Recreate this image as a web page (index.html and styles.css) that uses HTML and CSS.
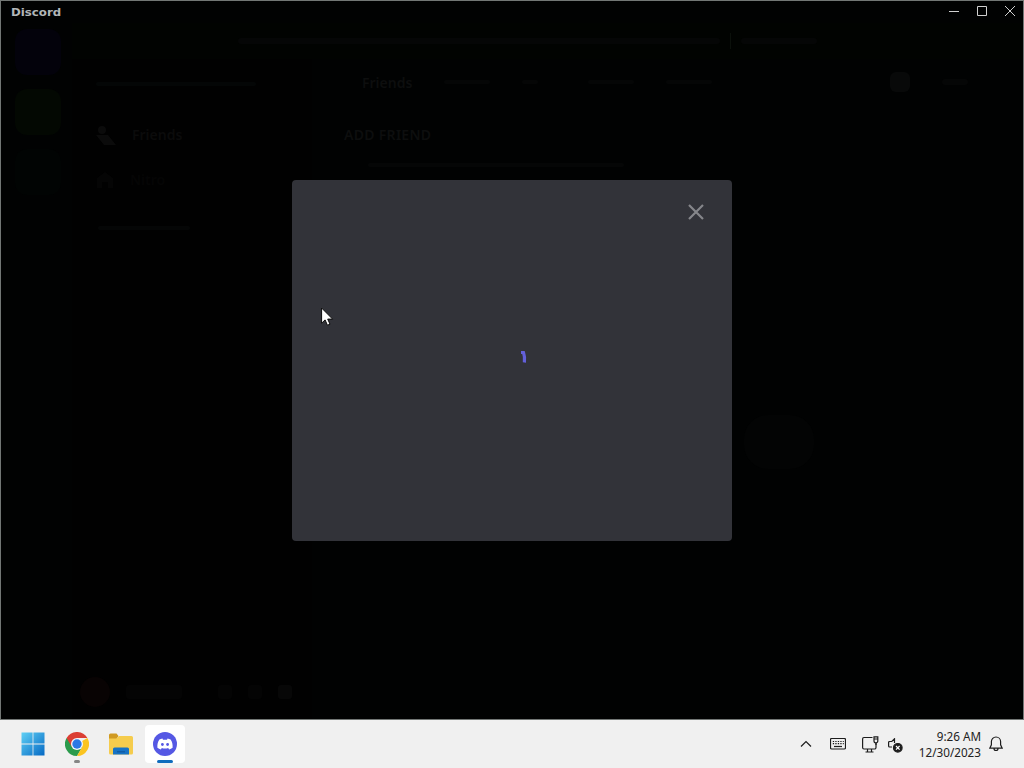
FILE: index.html
```html
<!DOCTYPE html>
<html lang="en">
<head>
  <meta charset="UTF-8" />
  <meta name="viewport" content="width=device-width, initial-scale=1" />
  <title>Discord</title>
  <link rel="stylesheet" href="styles.css">
</head>
<body>

  <!-- App window -->
  <div class="window">
    <header class="titlebar">
      <span class="wordmark">Discord</span>
      <div class="window-buttons">
        <svg width="28" height="22" viewBox="0 0 28 22"><path d="M9 11.5h10" /></svg>
        <svg width="28" height="22" viewBox="0 0 28 22"><path d="M9.500 6.500h9v9h-9z" /></svg>
        <svg width="28" height="22" viewBox="0 0 28 22"><path d="M9 6l10 10M19 6L9 16" /></svg>
      </div>
    </header>

    <!-- Dimmed app behind the modal -->
    <div class="app">
      <nav class="servers">
        <span class="server home"></span>
        <span class="server green"></span>
        <span class="server teal"></span>
      </nav>
      <div class="main">
        <div class="notice">
          <span class="bar notice-text"></span>
          <span class="notice-line"></span>
          <span class="bar notice-button"></span>
        </div>
        <div class="columns">
          <aside class="sidebar">
            <div class="bar search"></div>
            <div class="nav-item active">
              <svg width="20" height="20" viewBox="0 0 20 20"><circle cx="6" cy="5" r="4" /><path d="M0 10h12l8 10H8z" /></svg>
              <span>Friends</span>
            </div>
            <div class="nav-item">
              <svg width="18" height="18" viewBox="0 0 18 18"><path d="M1 7l8-6 8 6v10h-5v-6H6v6H1z" /></svg>
              <span>Nitro</span>
            </div>
            <div class="bar dm-title"></div>
            <div class="user">
              <span class="avatar"></span>
              <span class="bar user-name"></span>
              <span class="bar mic"></span>
              <span class="bar phones"></span>
              <span class="bar gear"></span>
            </div>
          </aside>
          <main class="content">
            <div class="tabs">
              <span class="tab-title">Friends</span>
              <span class="bar tab-a"></span>
              <span class="bar tab-b"></span>
              <span class="bar tab-c"></span>
              <span class="bar tab-d"></span>
              <span class="tab-icon"></span>
              <span class="bar tab-e"></span>
            </div>
            <h2 class="heading">ADD FRIEND</h2>
            <div class="bar hint"></div>
            <div class="blob"></div>
          </main>
        </div>
      </div>
    </div>

    <!-- Modal -->
    <div class="modal">
      <svg class="modal-close" width="24" height="24" viewBox="0 0 24 24"><path d="M5 5l14 14M19 5L5 19" /></svg>
      <svg class="spinner" width="10" height="16" viewBox="0 0 10 16"><path d="M2 3.500h2.500Q6 7.500 5.400 13.500" /></svg>
    </div>
  </div>

  <!-- Taskbar -->
  <footer class="taskbar">
    <div class="apps">
      <div class="app-button">
        <svg width="24" height="24" viewBox="0 0 24 24">
          <defs>
            <linearGradient id="win" x1="0" y1="0" x2="1" y2="1">
              <stop offset="0" stop-color="#5fd0f5" />
              <stop offset="1" stop-color="#0569c4" />
            </linearGradient>
          </defs>
          <path fill="url(#win)" d="M.5.500h11.100v11.100H.5zM12.400.500h11.100v11.100H12.400zM.5 12.400h11.100v11.100H.5zM12.400 12.400h11.100v11.100H12.400z" />
        </svg>
      </div>
      <div class="app-button">
        <svg width="24" height="24" viewBox="0 0 24 24">
          <path fill="#2b9b4c" d="M12 12l5.200 3L12 24A12 12 0 0 1 1.600 6z" />
          <path fill="#fbc41f" d="M12 12L22.400 6A12 12 0 0 1 12 24l5.200-9z" />
          <path fill="#db3f34" d="M12 12L6.800 15 1.600 6a12 12 0 0 1 20.800 0H12z" />
          <circle cx="12" cy="12" r="6" fill="#f4f6f8" />
          <circle cx="12" cy="12" r="4.700" fill="#2b78e4" />
        </svg>
        <span class="running"></span>
      </div>
      <div class="app-button">
        <svg width="26" height="24" viewBox="0 0 26 24">
          <path fill="#d09a22" d="M1 3a1.500 1.500 0 0 1 1.500-1.500h6l2 2.500-2 3H1z" />
          <path fill="#f5cc4d" d="M1 6.500h7.500L11 4h12.500A1.500 1.500 0 0 1 25 5.500v15.500a1.500 1.500 0 0 1-1.500 1.500h-21A1.500 1.500 0 0 1 1 21z" />
          <path fill="#1673c5" d="M5 22.500V17a1.500 1.500 0 0 1 1.500-1.500h13A1.500 1.500 0 0 1 21 17v5.500z" />
          <path fill="#0f5ca6" d="M9 19h8v1.500H9z" />
        </svg>
      </div>
      <div class="app-button current">
        <svg width="24" height="24" viewBox="0 0 24 24">
          <circle cx="12" cy="12" r="12" fill="#5558e4" />
          <path fill="#fff" d="M9.400 6.600l.6 1.100h4l.6-1.100 3 .9c1.600 2.300 2.300 5.200 2 8.200a9 9 0 0 1-3.500 1.700l-.9-1.500a8 8 0 0 1-6.400 0l-.9 1.500a9 9 0 0 1-3.500-1.700c-.3-3 .4-5.900 2-8.200z" />
          <circle cx="9.400" cy="12.500" r="1.400" fill="#5558e4" />
          <circle cx="14.600" cy="12.500" r="1.400" fill="#5558e4" />
        </svg>
        <span class="running"></span>
      </div>
    </div>

    <div class="tray">
      <svg class="chevron" width="12" height="8" viewBox="0 0 12 8"><path d="M1 6.500l5-5 5 5" /></svg>
      <svg class="keyboard" width="16" height="12" viewBox="0 0 16 12">
        <rect x=".5" y=".5" width="15" height="10.500" rx="1.200" />
        <path stroke-dasharray="1.300 1.200" d="M2.800 3.500h11M2.800 5.700h11" />
        <path d="M4 8.500h8" />
      </svg>
      <svg class="network" width="17" height="17" viewBox="0 0 17 17">
        <path d="M10.500 1.500H2A1.500 1.500 0 0 0 .6 3v8.500A1.500 1.500 0 0 0 2 13h10.500a1.500 1.500 0 0 0 1.500-1.500V7M5.500 13v3M9.500 13v3M3.500 16h8" />
        <path d="M12 .8h3.800v4.200a1.900 1.900 0 0 1-3.800 0zM12 3h3.800M14 6.500V9" />
      </svg>
      <svg class="volume" width="15" height="15" viewBox="0 0 15 15">
        <path d="M6.500 5V.8L3.800 3.500H1.600a1 1 0 0 0-1 1V8a1 1 0 0 0 1 1H4" />
        <circle class="dark" cx="9.800" cy="9.800" r="4.300" />
        <path class="light" d="M8 8l3.600 3.600M11.600 8L8 11.600" />
      </svg>
      <div class="clock">
        <span>9:26 AM</span>
        <span>12/30/2023</span>
      </div>
      <svg class="bell" width="14" height="16" viewBox="0 0 14 16">
        <path d="M7 1a4.600 4.600 0 0 0-4.600 4.600v3.200L.8 12.200h12.400l-1.600-3.400V5.600A4.600 4.600 0 0 0 7 1zM5 12.500a2 2 0 0 0 4 0" />
      </svg>
    </div>
  </footer>

  <svg class="cursor" width="13" height="20" viewBox="0 0 13 20">
    <path d="M.6 1v15.200l3.500-3.300 2.300 5.300 2.600-1-2.300-5.100h4.900z" />
  </svg>

</body>
</html>
```

FILE: styles.css
```css
* {
  margin: 0;
  padding: 0;
  box-sizing: border-box;
}

html, body {
  height: 100%;
  overflow: hidden;
  background: #000;
}

body {
  display: flex;
  flex-direction: column;
  font-family: "Noto Sans", "Open Sans", sans-serif;
}

/* Window */
.window {
  position: relative;
  display: flex;
  flex-direction: column;
  height: 720px;
  border: 1px solid #727775;
  background: #010202;
}

.titlebar {
  display: flex;
  justify-content: space-between;
  height: 22px;
  padding-left: 10px;
}

.wordmark {
  font-family: "DejaVu Sans", sans-serif;
  font-size: 10px;
  font-weight: bold;
  line-height: 23px;
  color: #b2b6b8;
  transform: scaleX(1.18);
  transform-origin: left;
}

.window-buttons {
  display: flex;
  margin: -1px -1px 0 0;
}

.window-buttons svg {
  fill: none;
  stroke: #d0d0d0;
  stroke-width: 1;
}

/* Dimmed app */
.app {
  display: flex;
  flex: 1;
}

.bar {
  display: block;
  border-radius: 3px;
  background: #050606;
}

.servers {
  display: flex;
  flex-direction: column;
  gap: 14px;
  width: 71px;
  padding: 6px 0 0 14px;
}

.server {
  width: 46px;
  height: 46px;
  border-radius: 12px;
}

.home {
  background: #03020b;
}

.green {
  background: #030802;
}

.teal {
  background: #010403;
}

.main {
  display: flex;
  flex-direction: column;
  flex: 1;
}

.notice {
  display: flex;
  align-items: center;
  gap: 10px;
  height: 36px;
  padding-left: 166px;
  background: #010301;
}

.notice-text {
  width: 482px;
  height: 6px;
}

.notice-line {
  width: 1px;
  height: 16px;
  background: #0b100b;
}

.notice-button {
  width: 76px;
  height: 6px;
}

.columns {
  display: flex;
  flex: 1;
}

.sidebar {
  display: flex;
  flex-direction: column;
  width: 240px;
  padding: 23px 8px 7px;
  background: #010101;
}

.search {
  width: 160px;
  height: 4px;
  margin: 0 0 26px 16px;
  background: #040606;
}

.nav-item {
  display: flex;
  align-items: center;
  gap: 16px;
  height: 45px;
  padding-left: 16px;
  font-size: 14px;
  font-weight: 600;
  color: #050505;
}

.nav-item svg {
  fill: currentColor;
}

.active {
  color: #0b0b0b;
}

.dm-title {
  width: 92px;
  height: 4px;
  margin: 24px 0 0 18px;
}

.user {
  display: flex;
  align-items: center;
  gap: 16px;
  height: 40px;
  margin-top: auto;
}

.avatar {
  width: 30px;
  height: 30px;
  border-radius: 50%;
  background: #080303;
}

.user-name {
  width: 56px;
  height: 14px;
  margin-right: 20px;
  background: #040404;
}

.mic,
.phones,
.gear {
  width: 14px;
  height: 14px;
  background: #040404;
}

.gear {
  background: #070707;
}

.content {
  flex: 1;
  padding: 11px 20px 0 32px;
}

.tabs {
  display: flex;
  align-items: center;
  gap: 32px;
  height: 24px;
}

.tab-title {
  margin-left: 18px;
  font-size: 14px;
  font-weight: 600;
  color: #0d0e0e;
}

.tab-a,
.tab-c,
.tab-d {
  width: 46px;
  height: 4px;
}

.tab-b {
  width: 16px;
  height: 4px;
  margin-right: 18px;
}

.tab-icon {
  width: 20px;
  height: 20px;
  margin-left: auto;
  border-radius: 6px;
  background: #080909;
}

.tab-e {
  width: 26px;
  height: 6px;
  margin-right: 35px;
}

.heading {
  margin-top: 31px;
  font-size: 14px;
  font-weight: 600;
  line-height: 20px;
  letter-spacing: 0.3px;
  color: #0d0e0e;
}

.hint {
  width: 256px;
  height: 4px;
  margin: 18px 0 0 24px;
}

.blob {
  width: 70px;
  height: 54px;
  margin: 248px 0 0 400px;
  border-radius: 24px;
  background: #030404;
}

/* Modal */
.modal {
  position: absolute;
  top: 179px;
  left: 291px;
  display: flex;
  justify-content: center;
  align-items: center;
  width: 440px;
  height: 361px;
  border-radius: 4px;
  background: #323339;
}

.modal-close {
  position: absolute;
  top: 20px;
  right: 24px;
  fill: none;
  stroke: #85868a;
  stroke-width: 2.2;
}

.spinner {
  margin: -7px 0 0 23px;
  fill: none;
  stroke: #6360da;
  stroke-width: 3.2;
}

/* Taskbar */
.taskbar {
  display: flex;
  justify-content: space-between;
  height: 48px;
  padding: 0 21px 0 13px;
  background: #f0f0f0;
}

.apps {
  display: flex;
  align-items: center;
  gap: 4px;
}

.app-button {
  position: relative;
  display: flex;
  justify-content: center;
  align-items: center;
  width: 40px;
  height: 38px;
  border-radius: 4px;
}

.current {
  background: #fff;
}

.running {
  position: absolute;
  bottom: 0;
  left: 17px;
  width: 6px;
  height: 3px;
  border-radius: 2px;
  background: #858585;
}

.current .running {
  left: 12px;
  width: 16px;
  background: #0f6cbd;
}

.tray {
  display: flex;
  align-items: center;
}

.tray svg {
  fill: none;
  stroke: #1d1d1d;
  stroke-width: 1.2;
}

.keyboard {
  margin-left: 18px;
}

.network {
  margin-left: 16px;
}

.volume {
  margin: 3px 0 0 9px;
}

.tray .dark {
  fill: #1d1d1d;
}

.tray .light {
  stroke: #fff;
}

.clock {
  display: flex;
  flex-direction: column;
  align-items: flex-end;
  width: 78px;
  font-size: 11.7px;
  line-height: 16px;
  color: #222;
  white-space: nowrap;
}

.bell {
  margin-left: 8px;
}

/* Pointer */
.cursor {
  position: absolute;
  top: 307px;
  left: 321px;
  fill: #fff;
  stroke: #0b0b0b;
  stroke-width: 1;
}
```
